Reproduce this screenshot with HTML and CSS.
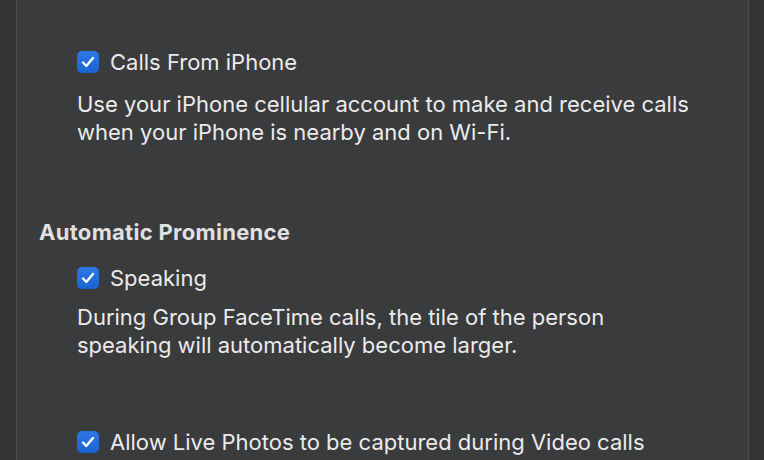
FILE: index.html
```html
<!DOCTYPE html>
<html lang="en">

<head>
    <meta charset="UTF-8">
    <meta name="viewport" content="width=device-width, initial-scale=1.0">
    <title>FaceTime Settings</title>
    <link rel="stylesheet" href="styles.css">
</head>

<body>
    <div class="panel">
        <div class="option">
            <label class="check-row">
                <span class="checkbox"><svg viewBox="0 0 22 22"><path d="M6 11.5l3.3 3.4 6.7-8" /></svg></span>
                Calls From iPhone
            </label>
            <p class="desc desc-calls">Use your iPhone cellular account to make and receive calls<br>when your iPhone is nearby and on Wi-Fi.</p>
        </div>

        <h2 class="section-title">Automatic Prominence</h2>

        <div class="option">
            <label class="check-row">
                <span class="checkbox"><svg viewBox="0 0 22 22"><path d="M6 11.5l3.3 3.4 6.7-8" /></svg></span>
                Speaking
            </label>
            <p class="desc desc-speaking">During Group FaceTime calls, the tile of the person<br>speaking will automatically become larger.</p>
        </div>

        <div class="option option-live">
            <label class="check-row">
                <span class="checkbox"><svg viewBox="0 0 22 22"><path d="M6 11.5l3.3 3.4 6.7-8" /></svg></span>
                Allow Live Photos to be captured during Video calls
            </label>
        </div>
    </div>
</body>

</html>
```

FILE: styles.css
```css
body {
    margin: 0;
    padding: 0;
    background: #323335;
    font-family: Inter, "Noto Sans", sans-serif;
    color: #ebebeb;
    overflow: hidden;
}

.panel {
    margin: 0 15px 0 16px;
    height: 460px;
    box-sizing: border-box;
    padding: 48px 0 0 22px;
    background: #3a3b3d;
    border-left: 1px solid #4b4c4e;
    border-right: 1px solid #4b4c4e;
}

.option {
    padding-left: 38px;
}

.check-row {
    display: flex;
    align-items: center;
    height: 28px;
    font-size: 22px;
    line-height: 28px;
}

.checkbox {
    flex: none;
    width: 22px;
    height: 22px;
    margin-right: 11px;
    border-radius: 5px;
    background: linear-gradient(#2b78e4, #1c63d0);
    display: flex;
    align-items: center;
    justify-content: center;
}

.checkbox svg {
    width: 22px;
    height: 22px;
    fill: none;
    stroke: #fff;
    stroke-width: 2.4;
    stroke-linecap: round;
    stroke-linejoin: round;
}

.desc {
    margin: 0;
    font-size: 22px;
    line-height: 28px;
}

.desc-calls {
    margin-top: 14px;
}

.desc-speaking {
    margin-top: 11px;
}

.section-title {
    margin: 72px 0 18px;
    font-size: 22px;
    line-height: 28px;
    font-weight: 700;
    letter-spacing: 0.3px;
    color: #e0e0e0;
}

.option-live {
    margin-top: 69px;
}
```
